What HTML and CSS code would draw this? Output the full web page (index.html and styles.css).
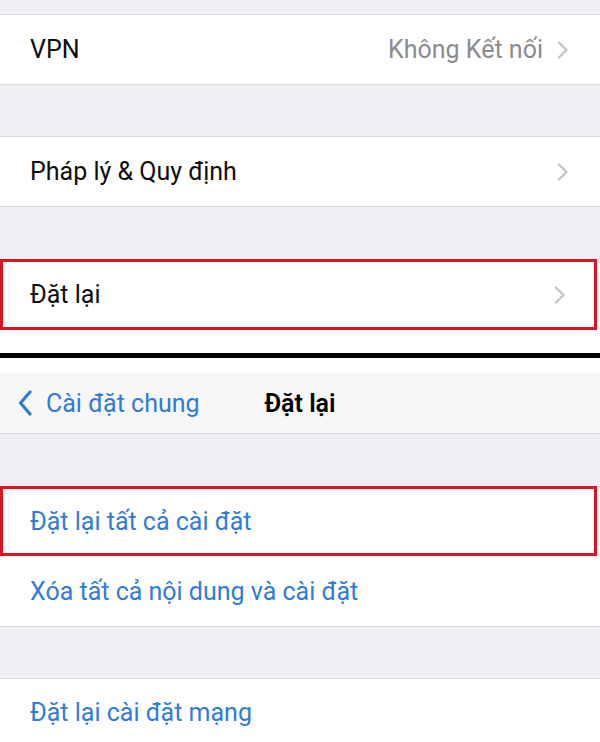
FILE: index.html
```html
<!DOCTYPE html>
<html lang="vi">
<head>
<meta charset="utf-8">
<link rel="stylesheet" href="styles.css">
</head>
<body>
<div class="screen screen-top">
  <div class="gap gap-top"></div>
  <div class="group">
    <div class="row">
      <span class="label">VPN</span>
      <span class="value">Không Kết nối</span>
      <svg class="chev" viewBox="0 0 11 18"><path d="M1.5 1.5 L9 9 L1.5 16.5"/></svg>
    </div>
  </div>
  <div class="gap"></div>
  <div class="group">
    <div class="row">
      <span class="label">Pháp lý &amp; Quy định</span>
      <svg class="chev" viewBox="0 0 11 18"><path d="M1.5 1.5 L9 9 L1.5 16.5"/></svg>
    </div>
  </div>
  <div class="gap gap-before-mark"></div>
  <div class="group group-open">
    <div class="row row-mark">
      <span class="label">Đặt lại</span>
      <svg class="chev" viewBox="0 0 11 18"><path d="M1.5 1.5 L9 9 L1.5 16.5"/></svg>
    </div>
    <div class="tail"></div>
  </div>
</div>
<div class="divider"></div>
<div class="screen screen-bottom">
  <div class="status-space"></div>
  <div class="navbar">
    <div class="back">
      <svg class="back-chev" viewBox="0 0 14 26"><path d="M12 2 L2.5 13 L12 24"/></svg>
      <span>Cài đặt chung</span>
    </div>
    <div class="title">Đặt lại</div>
  </div>
  <div class="gap gap-nav"></div>
  <div class="group">
    <div class="row row-mark row-blue"><span class="label link">Đặt lại tất cả cài đặt</span></div>
    <div class="row row-blue"><span class="label link">Xóa tất cả nội dung và cài đặt</span></div>
  </div>
  <div class="gap"></div>
  <div class="group group-open">
    <div class="row row-blue row-last"><span class="label link">Đặt lại cài đặt mạng</span></div>
  </div>
</div>
</body>
</html>
```

FILE: styles.css
```css
* { box-sizing: border-box; }
html, body {
  margin: 0;
  padding: 0;
  width: 600px;
  height: 742px;
  overflow: hidden;
  background: #efeff4;
  font-family: Roboto, "Noto Sans", "Liberation Sans", sans-serif;
}
.screen { display: flex; flex-direction: column; }
.gap { height: 51px; background: #efeff4; }
.gap-top { height: 14px; }
.gap-before-mark { height: 52px; }
.gap-nav { height: 52px; }
.group {
  background: #fff;
  border-top: 1px solid #d9d9de;
  border-bottom: 1px solid #d9d9de;
}
.group-open { border-bottom: none; }
.row {
  height: 69px;
  display: flex;
  align-items: center;
  padding: 0 30px;
  position: relative;
}
.label {
  font-size: 25px;
  color: #0d0d0d;
  flex: 1;
}
.value {
  font-size: 25px;
  color: #8b8b90;
  margin-right: 14px;
}
.chev {
  width: 12px;
  height: 18px;
  fill: none;
  stroke: #c3c3c8;
  stroke-width: 2.2;
  stroke-linecap: round;
  stroke-linejoin: round;
  margin-right: 1px;
}
.row-mark {
  height: 71px;
  margin-top: -1px;
  border: 3px solid #e1121f;
  margin-right: 3px;
  padding-left: 27px;
}
.row-mark .chev { margin-right: -2px; }
.tail { height: 23px; background: #fff; }
.divider { height: 5px; background: #000; }
.status-space { height: 15px; background: #fff; }
.navbar {
  height: 61px;
  background: #f7f7f8;
  border-bottom: 1px solid #d6d6da;
  display: flex;
  align-items: center;
  position: relative;
  padding-left: 18px;
}
.back {
  display: flex;
  align-items: center;
  color: #2f7bd8;
  font-size: 25px;
}
.back-chev {
  width: 14px;
  height: 26px;
  fill: none;
  stroke: #2f7bd8;
  stroke-width: 3.2;
  stroke-linecap: round;
  stroke-linejoin: round;
  margin-right: 14px;
}
.title {
  position: absolute;
  left: 0;
  right: 0;
  text-align: center;
  font-size: 25px;
  font-weight: 600;
  color: #000;
  pointer-events: none;
}
.row-blue { height: 70px; }
.row-blue.row-mark { height: 70px; }
.link { color: #2f7bd8; }
.row-last { height: 66px; }
```
